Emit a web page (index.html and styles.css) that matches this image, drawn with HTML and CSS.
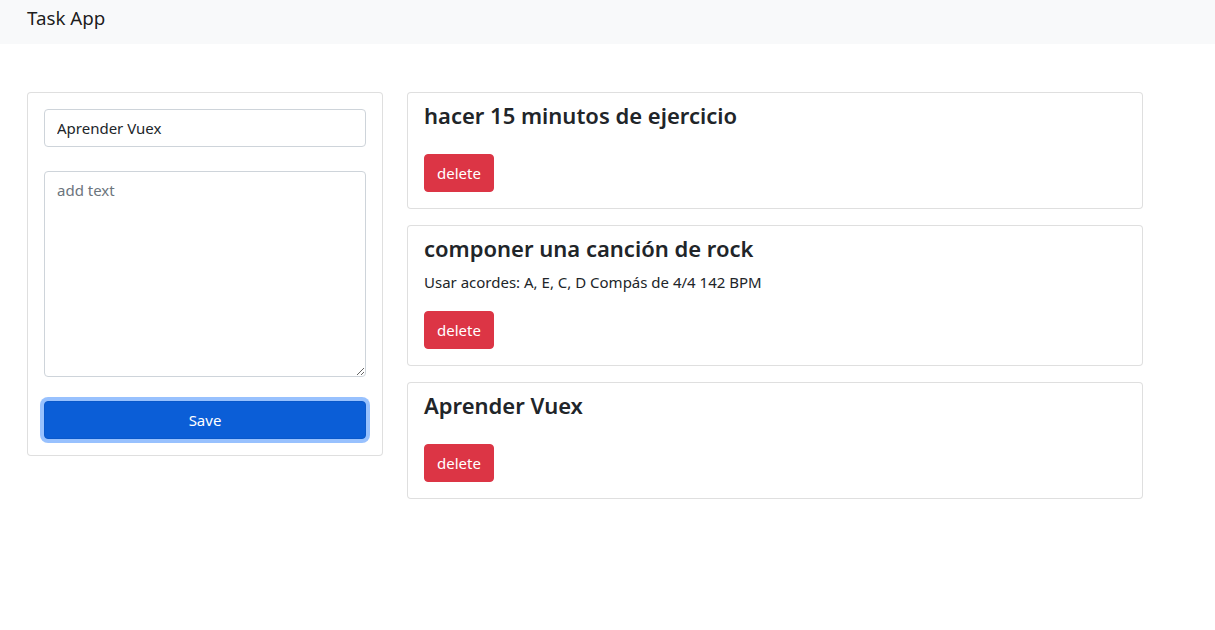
FILE: index.html
```html
<!DOCTYPE html>
<html lang="es">
<head>
<meta charset="utf-8">
<title>Task App</title>
<link rel="stylesheet" href="styles.css">
</head>
<body>
<nav class="navbar">
  <span class="brand">Task App</span>
</nav>
<main class="layout">
  <section class="card form-card">
    <form class="form">
      <input class="control" type="text" value="Aprender Vuex">
      <textarea class="control area" placeholder="add text"></textarea>
      <button type="button" class="btn btn-save">Save</button>
    </form>
  </section>
  <section class="task-list">
    <article class="card task">
      <h4 class="task-title">hacer 15 minutos de ejercicio</h4>
      <p class="task-text"></p>
      <div><button type="button" class="btn btn-delete">delete</button></div>
    </article>
    <article class="card task">
      <h4 class="task-title">componer una canción de rock</h4>
      <p class="task-text">Usar acordes: A, E, C, D Compás de 4/4 142 BPM</p>
      <div><button type="button" class="btn btn-delete">delete</button></div>
    </article>
    <article class="card task">
      <h4 class="task-title">Aprender Vuex</h4>
      <p class="task-text"></p>
      <div><button type="button" class="btn btn-delete">delete</button></div>
    </article>
  </section>
</main>
</body>
</html>
```
FILE: styles.css
```css
* { box-sizing: border-box; }
html, body { margin: 0; padding: 0; }
body {
  font-family: "Noto Sans", "Open Sans", "Liberation Sans", sans-serif;
  font-size: 15px;
  line-height: 24px;
  color: #212529;
  background: #fff;
}
.navbar {
  height: 44px;
  background: #f8f9fa;
  padding: 3px 27px 0;
}
.brand {
  display: block;
  font-size: 18.75px;
  line-height: 30px;
  color: rgba(0,0,0,.9);
}
.layout {
  display: grid;
  grid-template-columns: 356px 736px;
  column-gap: 24px;
  align-items: start;
  padding: 48px 27px 0;
}
.card {
  border: 1px solid rgba(0,0,0,.125);
  border-radius: 4px;
  background: #fff;
  padding: 16px;
}
.form {
  display: flex;
  flex-direction: column;
}
.control {
  display: block;
  width: 100%;
  font: inherit;
  color: #212529;
  border: 1px solid #ced4da;
  border-radius: 4px;
  padding: 6px 12px;
  height: 38px;
  background: #fff;
  margin: 0;
}
.area {
  height: 206px;
  margin-top: 24px;
  resize: vertical;
}
.area::placeholder { color: #6c757d; }
.btn {
  font: inherit;
  border: 1px solid transparent;
  border-radius: 4px;
  padding: 6px 12px;
  height: 38px;
  line-height: 24px;
  color: #fff;
  cursor: pointer;
}
.btn-save {
  margin-top: 24px;
  width: 100%;
  background: #0b5ed7;
  border-color: #0a58ca;
  box-shadow: 0 0 0 4px rgba(49,132,253,.5);
}
.btn-delete {
  background: #dc3545;
  border-color: #dc3545;
}
.task-list {
  display: flex;
  flex-direction: column;
  gap: 16px;
}
.task {
  display: flex;
  flex-direction: column;
  padding-top: 8px;
}
.task-title {
  margin: 0 0 7px;
  font-size: 22px;
  font-weight: 600;
  line-height: 29px;
}
.task-text {
  margin: 0 0 17px;
}
```
